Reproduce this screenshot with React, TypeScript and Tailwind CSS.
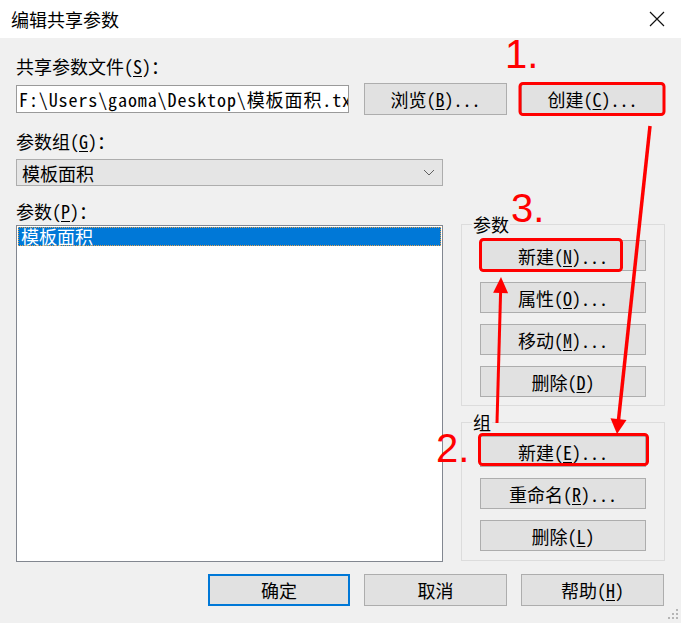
import React from "react";

const Btn = ({ children, className = "" }: { children: React.ReactNode; className?: string }) => (
  <div className={`flex items-center justify-center bg-[#e1e1e1] text-[18px] leading-none text-black ${className}`}>
    {children}
  </div>
);

// accelerator letter, underlined like the Win32 dialog
const K = ({ c }: { c: string }) => <span className="underline underline-offset-2">{c}</span>;

export default function App() {
  return (
    <div className="relative h-[623px] w-[681px] overflow-hidden bg-[#f0f0f0] font-['Noto_Sans_Mono_CJK_SC','Noto_Sans_CJK_SC',sans-serif] text-black">
      {/* title bar */}
      <div className="flex h-[38px] items-center justify-between bg-white pl-[11px] pr-[16px]">
        <span className="font-['Noto_Sans_CJK_SC',sans-serif] text-[18px] leading-none">编辑共享参数</span>
        <svg width="16" height="16" viewBox="0 0 16 16">
          <path d="M1 1L15 15M15 1L1 15" stroke="#111" strokeWidth="1.2" />
        </svg>
      </div>

      <div className="px-[16px]">
        <div className="mt-[18px] h-[20px] text-[18px] leading-[20px]">
          共享参数文件(<K c="S" />)：
        </div>
        <div className="mt-[7px] flex h-[32px] items-center">
          <div className="flex h-[28px] w-[333px] items-center overflow-hidden whitespace-nowrap border border-[#9a9a9a] bg-white pl-[2px] text-[18px] leading-none tracking-[0.9px]">
            {"F:\\Users\\gaoma\\Desktop\\模板面积.txt"}
          </div>
          <Btn className="ml-[15px] h-[32px] w-[143px] border border-[#adadad]">
            浏览(<K c="B" />)...
          </Btn>
          <Btn className="ml-[14px] h-[32px] w-[143px] border border-[#adadad]">
            创建(<K c="C" />)...
          </Btn>
        </div>

        <div className="mt-[16px] h-[20px] text-[18px] leading-[20px]">
          参数组(<K c="G" />)：
        </div>
        <div className="mt-[8px] flex h-[27px] w-[427px] items-center justify-between border border-[#adadad] bg-[#e5e5e5] pl-[5px] pr-[7px] text-[18px] leading-none">
          <span>模板面积</span>
          <svg width="12" height="7" viewBox="0 0 12 7">
            <path d="M1 1L6 6L11 1" fill="none" stroke="#606060" strokeWidth="1" />
          </svg>
        </div>

        <div className="mt-[15px] flex">
          <div className="flex flex-col">
            <div className="h-[20px] text-[18px] leading-[20px]">
              参数(<K c="P" />)：
            </div>
            <div className="mt-[4px] h-[337px] w-[427px] border border-[#828790] bg-white p-px">
              <div className="h-[19px] bg-[#0078d7] pl-[3px] text-[18px] leading-[19px] text-white outline-1 outline-dotted outline-[#e0a050] -outline-offset-1">
                模板面积
              </div>
            </div>
          </div>

          <div className="ml-[18px] mt-[13px] flex w-[204px] flex-col">
            <fieldset className="border border-[#dcdcdc] px-[18px] pb-[8px]">
              <legend className="-ml-[8px] px-px text-[18px] leading-[20px]">参数</legend>
              <div className="mt-[6px] flex flex-col gap-[11px]">
                <Btn className="h-[31px] border border-[#adadad]">新建(<K c="N" />)...</Btn>
                <Btn className="h-[31px] border border-[#adadad]">属性(<K c="O" />)...</Btn>
                <Btn className="h-[31px] border border-[#adadad]">移动(<K c="M" />)...</Btn>
                <Btn className="h-[31px] border border-[#adadad]">删除(<K c="D" />)</Btn>
              </div>
            </fieldset>
            <fieldset className="mt-[6px] border border-[#dcdcdc] px-[18px] pb-[9px]">
              <legend className="-ml-[8px] px-px text-[18px] leading-[20px]">组</legend>
              <div className="mt-[4px] flex flex-col gap-[11px]">
                <Btn className="h-[31px] border border-[#adadad]">新建(<K c="E" />)...</Btn>
                <Btn className="h-[31px] border border-[#adadad]">重命名(<K c="R" />)...</Btn>
                <Btn className="h-[31px] border border-[#adadad]">删除(<K c="L" />)</Btn>
              </div>
            </fieldset>
          </div>
        </div>

        <div className="mt-[12px] flex justify-end gap-[14px] pr-px">
          <Btn className="h-[32px] w-[142px] border-2 border-[#0078d7]">确定</Btn>
          <Btn className="h-[32px] w-[143px] border border-[#adadad]">取消</Btn>
          <Btn className="h-[32px] w-[143px] border border-[#adadad]">
            帮助(<K c="H" />)
          </Btn>
        </div>
      </div>

      {/* red annotations drawn over the dialog */}
      <svg className="pointer-events-none absolute left-0 top-0" width="681" height="623" viewBox="0 0 681 623">
        <g fill="none" stroke="#ff0000" strokeWidth="3">
          <rect x="520" y="83.5" width="144" height="31" rx="3" />
          <rect x="480.5" y="239.5" width="141" height="31" rx="3" />
          <rect x="479.5" y="434.5" width="168" height="30" rx="3" />
          <path d="M650 126L618.5 420" strokeWidth="3.5" />
          <path d="M497 423L500.6 292" />
        </g>
        <g fill="#ff0000">
          <polygon points="626.5,420 610.5,418.2 617,434" />
          <polygon points="508.1,293.2 493.1,292.8 501,277" />
        </g>
        <g fill="#b5b5b5">
          <rect x="676" y="609" width="2" height="2" />
          <rect x="672" y="613" width="2" height="2" />
          <rect x="676" y="613" width="2" height="2" />
          <rect x="668" y="617" width="2" height="2" />
          <rect x="672" y="617" width="2" height="2" />
          <rect x="676" y="617" width="2" height="2" />
        </g>
      </svg>
      <span className="absolute left-[505px] top-[34px] font-['Liberation_Sans',sans-serif] text-[40px] leading-none text-[#ff0000]">1.</span>
      <span className="absolute left-[511px] top-[188px] font-['Liberation_Sans',sans-serif] text-[40px] leading-none text-[#ff0000]">3.</span>
      <span className="absolute left-[436px] top-[428px] font-['Liberation_Sans',sans-serif] text-[40px] leading-none text-[#ff0000]">2.</span>
    </div>
  );
}
